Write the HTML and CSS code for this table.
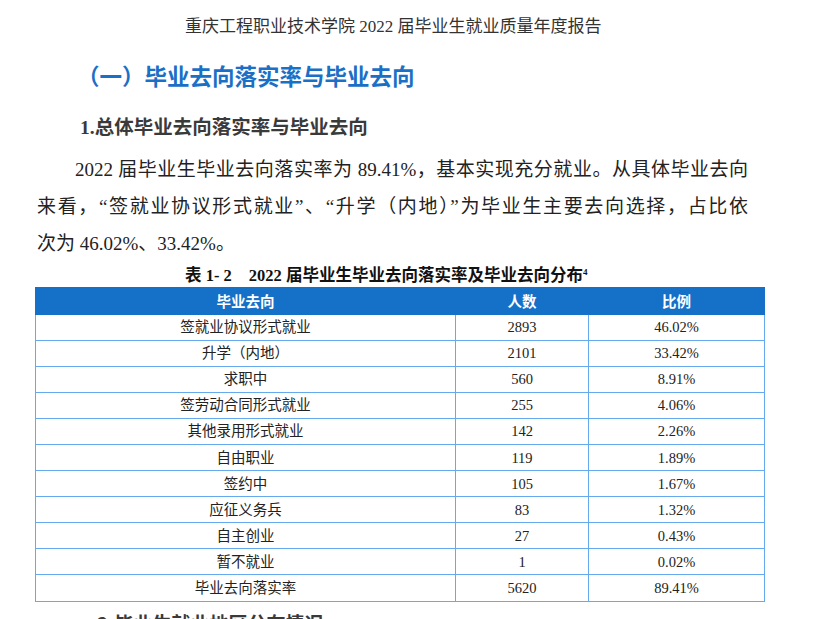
FILE: index.html
```html
<!DOCTYPE html>
<html lang="zh-CN">
<head>
<meta charset="utf-8">
<title>重庆工程职业技术学院 2022 届毕业生就业质量年度报告</title>
<link rel="stylesheet" href="styles.css">
</head>
<body>
<div class="page">
  <header class="running-head">重庆工程职业技术学院 2022 届毕业生就业质量年度报告</header>
  <h2 class="section-title">（一）毕业去向落实率与毕业去向</h2>
  <h3 class="sub-title"><span class="num">1.</span>总体毕业去向落实率与毕业去向</h3>
  <p class="body-text">
    <span class="line first just">2022 届毕业生毕业去向落实率为 89.41%，基本实现充分就业。从具体毕业去向</span>
    <span class="line just">来看，“签就业协议形式就业”、“升学（内地）”为毕业生主要去向选择，占比依</span>
    <span class="line">次为 46.02%、33.42%。</span>
  </p>
  <div class="caption"><span class="num">表 1- 2</span><span class="cap-text">2022 届毕业生毕业去向落实率及毕业去向分布<sup>4</sup></span></div>
  <table class="data">
    <thead>
      <tr><th class="c1">毕业去向</th><th class="c2">人数</th><th class="c3">比例</th></tr>
    </thead>
    <tbody>
      <tr><td>签就业协议形式就业</td><td>2893</td><td>46.02%</td></tr>
      <tr><td>升学（内地）</td><td>2101</td><td>33.42%</td></tr>
      <tr><td>求职中</td><td>560</td><td>8.91%</td></tr>
      <tr><td>签劳动合同形式就业</td><td>255</td><td>4.06%</td></tr>
      <tr><td>其他录用形式就业</td><td>142</td><td>2.26%</td></tr>
      <tr><td>自由职业</td><td>119</td><td>1.89%</td></tr>
      <tr><td>签约中</td><td>105</td><td>1.67%</td></tr>
      <tr><td>应征义务兵</td><td>83</td><td>1.32%</td></tr>
      <tr><td>自主创业</td><td>27</td><td>0.43%</td></tr>
      <tr><td>暂不就业</td><td>1</td><td>0.02%</td></tr>
      <tr><td>毕业去向落实率</td><td>5620</td><td>89.41%</td></tr>
    </tbody>
  </table>
  <h3 class="next-title">2.毕业生就业地区分布情况</h3>
</div>
</body>
</html>
```

FILE: styles.css
```css
html, body {
  margin: 0;
  padding: 0;
  background: #ffffff;
}

body {
  overflow: hidden;
  font-family: "Liberation Serif", "Noto Sans CJK SC", serif;
  color: #222;
}

.page {
  margin-left: 35px;
  width: 728px;
}

.running-head {
  margin-top: 15px;
  padding-left: 150px;
  font-size: 17px;
  line-height: 24px;
  color: #333;
  white-space: nowrap;
}

.section-title {
  margin: 21px 0 0 42px;
  font-family: "Noto Sans CJK SC", sans-serif;
  font-weight: 700;
  font-size: 22.5px;
  line-height: 30px;
  color: #1a6fc6;
  white-space: nowrap;
}

.sub-title {
  margin: 22px 0 0 45px;
  font-family: "Noto Sans CJK SC", sans-serif;
  font-weight: 700;
  font-size: 19.5px;
  line-height: 28px;
  color: #3a3a3a;
  white-space: nowrap;
}

.sub-title .num {
  font-family: "Liberation Serif", serif;
  font-weight: 700;
}

.body-text {
  margin: 9px 0 0 2px;
  width: 711px;
  font-size: 19px;
  line-height: 37px;
  color: #222;
}

.body-text .line {
  display: block;
  white-space: nowrap;
}

.body-text .just {
  text-align: justify;
  text-align-last: justify;
  white-space: normal;
}

.body-text .first {
  text-indent: 38px;
}

.caption {
  margin-top: 3px;
  padding-left: 150px;
  font-size: 16.5px;
  line-height: 22px;
  font-weight: 700;
  color: #111;
  white-space: nowrap;
  display: flex;
  gap: 17px;
}

.caption sup {
  font-size: 9px;
  line-height: 0;
}

.data {
  border-collapse: collapse;
  width: 726px;
  table-layout: fixed;
  font-size: 14.5px;
}

.data th {
  background: #1570c7;
  color: #fff;
  font-family: "Noto Sans CJK SC", sans-serif;
  font-weight: 700;
  height: 25.5px;
  padding: 0;
  border: 1.5px solid #1570c7;
  line-height: 20px;
}

.data .c1 { width: 419px; }
.data .c2 { width: 132px; }
.data .c3 { width: 175px; }

.data td {
  height: 25.1px;
  padding: 0;
  text-align: center;
  line-height: 20px;
  border: 1.5px solid #65aaee;
  color: #222;
}

.next-title {
  margin: 7px 0 0 62px;
  font-family: "Noto Sans CJK SC", sans-serif;
  font-weight: 700;
  font-size: 19px;
  line-height: 28px;
  color: #3a3a3a;
}
```
